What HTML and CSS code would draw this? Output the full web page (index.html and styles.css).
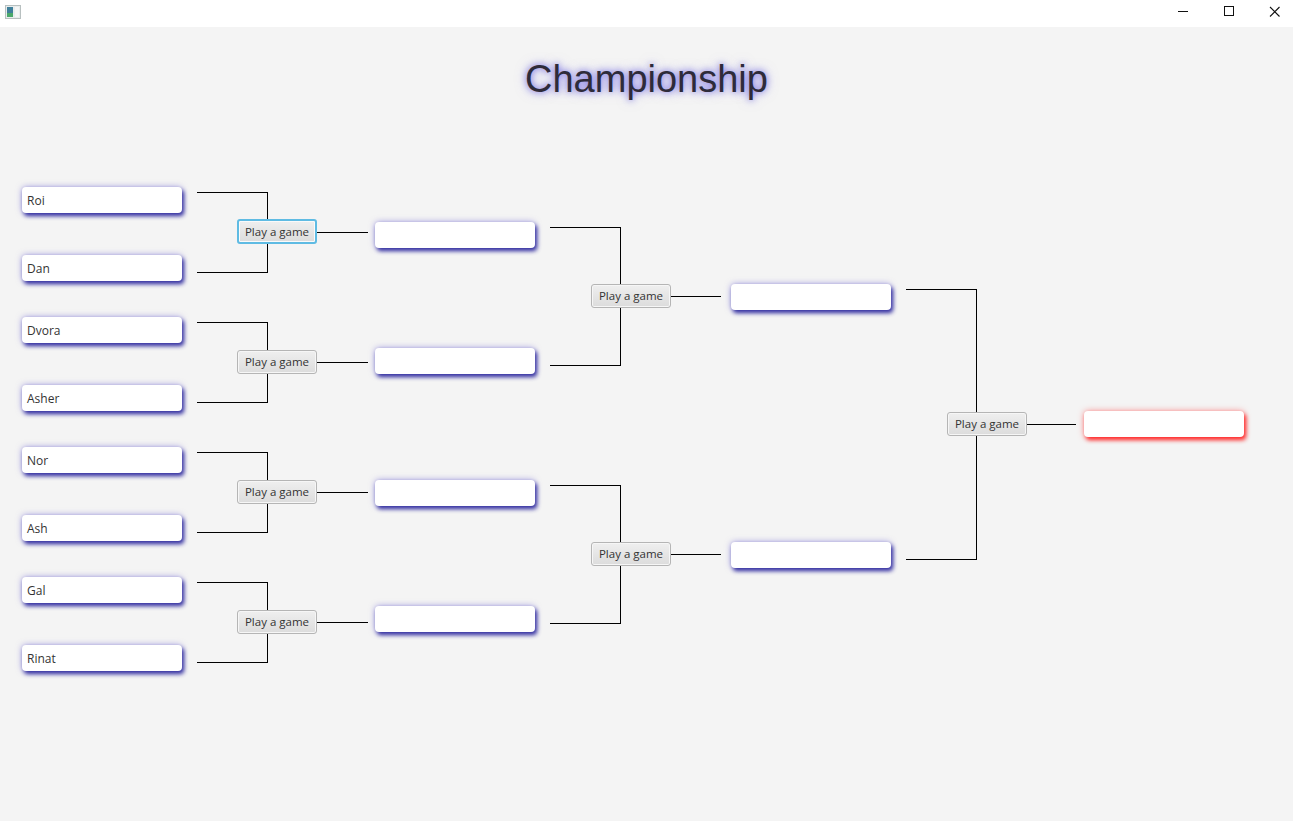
FILE: index.html
```html
<!DOCTYPE html>
<html lang="en">
<head>
    <meta charset="UTF-8">
    <meta name="viewport" content="width=device-width, initial-scale=1.0">
    <title>Championship</title>
    <link rel="stylesheet" href="styles.css">
</head>
<body>
    <header class="titlebar">
        <svg class="app-icon" width="16" height="14" viewBox="0 0 16 14">
            <rect x="0.5" y="0.5" width="15" height="13" fill="#e8ecec" stroke="#b8c0c0"/>
            <rect x="2" y="2" width="6" height="10" fill="#3f7f9a"/>
            <rect x="2" y="8" width="6" height="4" fill="#4aa86a"/>
            <rect x="10" y="2" width="4" height="10" fill="#f4f6f6"/>
        </svg>
        <div class="controls">
            <svg class="ctl" width="46" height="27" viewBox="0 0 46 27"><path d="M23 11.5h10" stroke="#111" stroke-width="1"/></svg>
            <svg class="ctl" width="46" height="27" viewBox="0 0 46 27"><rect x="23.5" y="6.5" width="9" height="9" fill="none" stroke="#111"/></svg>
            <svg class="ctl" width="46" height="27" viewBox="0 0 46 27"><path d="M23 7l9.5 9.5M32.5 7L23 16.5" stroke="#111" stroke-width="1.1"/></svg>
        </div>
    </header>

    <main class="stage">
        <h1 class="title">Championship</h1>

        <div class="bracket">
            <!-- connector lines, coordinates relative to the bracket -->
            <svg class="lines" width="1293" height="520" viewBox="0 0 1293 520">
                <g stroke="#000" stroke-width="1" fill="none" shape-rendering="crispEdges">
                    <path d="M197 12.5H267.5V92.5H197M317 52.5H368"/>
                    <path d="M197 142.5H267.5V222.5H197M317 182.5H368"/>
                    <path d="M197 272.5H267.5V352.5H197M317 312.5H368"/>
                    <path d="M197 402.5H267.5V482.5H197M317 442.5H368"/>
                    <path d="M550 47.5H620.5V185.5H550M671 116.5H721"/>
                    <path d="M550 305.5H620.5V443.5H550M671 374.5H721"/>
                    <path d="M906 109.5H976.5V379.5H906M1026 244.5H1076"/>
                </g>
            </svg>

            <div class="slot" style="left:22px;top:7px">Roi</div>
            <div class="slot" style="left:22px;top:75px">Dan</div>
            <div class="slot" style="left:22px;top:137px">Dvora</div>
            <div class="slot" style="left:22px;top:205px">Asher</div>
            <div class="slot" style="left:22px;top:267px">Nor</div>
            <div class="slot" style="left:22px;top:335px">Ash</div>
            <div class="slot" style="left:22px;top:397px">Gal</div>
            <div class="slot" style="left:22px;top:465px">Rinat</div>

            <button class="play focused" style="left:237px;top:39px">Play a game</button>
            <button class="play" style="left:237px;top:170px">Play a game</button>
            <button class="play" style="left:237px;top:300px">Play a game</button>
            <button class="play" style="left:237px;top:430px">Play a game</button>

            <div class="slot" style="left:375px;top:42px"></div>
            <div class="slot" style="left:375px;top:168px"></div>
            <div class="slot" style="left:375px;top:300px"></div>
            <div class="slot" style="left:375px;top:426px"></div>

            <button class="play" style="left:591px;top:104px">Play a game</button>
            <button class="play" style="left:591px;top:362px">Play a game</button>

            <div class="slot" style="left:731px;top:104px"></div>
            <div class="slot" style="left:731px;top:362px"></div>

            <button class="play" style="left:947px;top:232px">Play a game</button>

            <div class="slot winner" style="left:1084px;top:231px"></div>
        </div>
    </main>
</body>
</html>
```

FILE: styles.css
```css
body {
    margin: 0;
    padding: 0;
    font-family: "Open Sans", "Noto Sans", sans-serif;
    background: #f4f4f4;
    color: #333;
    overflow: hidden;
}

.titlebar {
    height: 27px;
    background: #fff;
    display: flex;
    align-items: center;
    justify-content: space-between;
}

.app-icon {
    margin-left: 5px;
    margin-top: -4px;
}

.controls {
    display: flex;
    align-self: flex-start;
}

.ctl {
    display: block;
}

.stage {
    height: 794px;
    background: #f4f4f4;
}

.title {
    margin: 31px 0 0;
    text-align: center;
    font-family: "Liberation Sans", Arial, sans-serif;
    font-weight: normal;
    font-size: 38px;
    line-height: 42px;
    color: #2e2b3a;
    text-shadow: 0 0 6px rgba(90, 80, 220, 0.8), 0 0 12px rgba(120, 110, 230, 0.55);
}

.bracket {
    position: relative;
    margin-top: 80px;
    height: 520px;
}

.lines {
    position: absolute;
    left: 0;
    top: 0;
}

.slot {
    position: absolute;
    width: 155px;
    height: 26px;
    padding-left: 5px;
    background: #fff;
    border-radius: 4px;
    font-size: 12px;
    line-height: 28px;
    color: #333;
    box-shadow: 2px 3px 4px #3430a0, 0 0 6px rgba(110, 100, 210, 0.6);
}

.slot.winner {
    box-shadow: 2px 3px 4px #ff2a2a, 0 0 6px rgba(255, 80, 80, 0.6);
}

.play {
    position: absolute;
    width: 80px;
    height: 24px;
    padding: 0;
    margin: 0;
    border: 1px solid #b5b5b5;
    border-radius: 3px;
    background: linear-gradient(#efefef, #dcdcdc);
    font-family: "Open Sans", "Noto Sans", sans-serif;
    font-size: 11.5px;
    line-height: 20px;
    color: #333;
    box-shadow: inset 0 0 0 1px #f6f6f6;
}

.play.focused {
    height: 25px;
    border: 2px solid #5fbbe3;
    box-shadow: inset 0 0 0 1px #fafafa;
}
```
